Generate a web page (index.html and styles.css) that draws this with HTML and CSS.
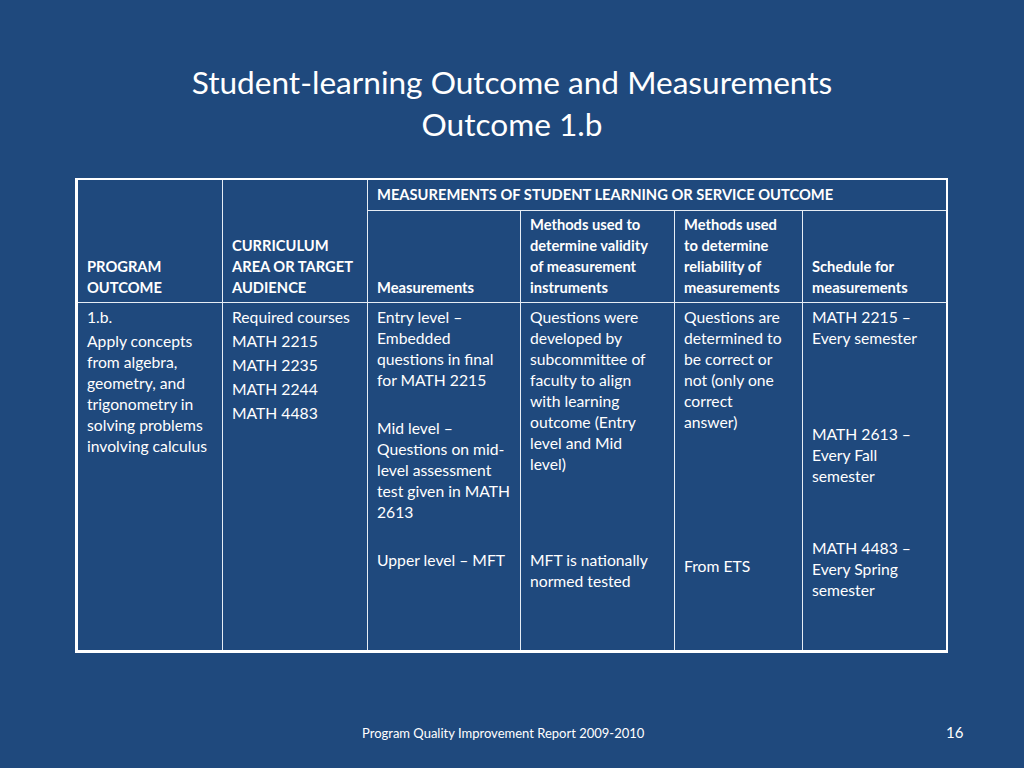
FILE: index.html
```html
<!DOCTYPE html>
<html>
<head>
<meta charset="utf-8">
<link rel="stylesheet" href="styles.css">
</head>
<body>
<div class="slide">
  <h1 class="title">Student-learning Outcome and Measurements<br>Outcome 1.b</h1>
  <table class="grid">
    <colgroup>
      <col class="c1"><col class="c2"><col class="c3"><col class="c4"><col class="c5"><col class="c6">
    </colgroup>
    <thead>
      <tr>
        <th rowspan="2">PROGRAM<br>OUTCOME</th>
        <th rowspan="2">CURRICULUM<br>AREA OR TARGET<br>AUDIENCE</th>
        <th colspan="4" class="span">MEASUREMENTS OF STUDENT LEARNING OR SERVICE OUTCOME</th>
      </tr>
      <tr>
        <th>Measurements</th>
        <th>Methods used to<br>determine validity<br>of measurement<br>instruments</th>
        <th>Methods used<br>to determine<br>reliability of<br>measurements</th>
        <th>Schedule for<br>measurements</th>
      </tr>
    </thead>
    <tbody>
      <tr>
        <td>
          <p>1.b.</p>
          <p>Apply concepts<br>from algebra,<br>geometry, and<br>trigonometry in<br>solving problems<br>involving calculus</p>
        </td>
        <td>
          <p>Required courses</p>
          <p>MATH 2215</p>
          <p>MATH 2235</p>
          <p>MATH 2244</p>
          <p>MATH 4483</p>
        </td>
        <td>
          <p>Entry level –<br>Embedded<br>questions in final<br>for MATH 2215</p>
          <p class="blank">&nbsp;</p>
          <p>Mid level –<br>Questions on mid-<br>level assessment<br>test given in MATH<br>2613</p>
          <p class="blank">&nbsp;</p>
          <p>Upper level – MFT</p>
        </td>
        <td>
          <p>Questions were<br>developed by<br>subcommittee of<br>faculty to align<br>with learning<br>outcome (Entry<br>level and Mid<br>level)</p>
          <p class="blank">&nbsp;</p>
          <p class="blank">&nbsp;</p>
          <p class="blank">&nbsp;</p>
          <p>MFT is nationally<br>normed tested</p>
        </td>
        <td>
          <p>Questions are<br>determined to<br>be correct or<br>not (only one<br>correct<br>answer)</p>
          <p class="blank">&nbsp;</p>
          <p class="blank">&nbsp;</p>
          <p class="blank">&nbsp;</p>
          <p class="blank">&nbsp;</p>
          <p class="blank">&nbsp;</p>
          <p>From ETS</p>
        </td>
        <td>
          <p>MATH 2215 –<br>Every semester</p>
          <p class="blank">&nbsp;</p>
          <p class="blank">&nbsp;</p>
          <p class="blank">&nbsp;</p>
          <p>MATH 2613 –<br>Every Fall<br>semester</p>
          <p class="blank">&nbsp;</p>
          <p class="blank">&nbsp;</p>
          <p>MATH 4483 –<br>Every Spring<br>semester</p>
        </td>
      </tr>
    </tbody>
  </table>
  <div class="footer">
    <span class="report">Program Quality Improvement Report 2009-2010</span>
    <span class="page">16</span>
  </div>
</div>
</body>
</html>
```

FILE: styles.css
```css
html, body {
  margin: 0;
  padding: 0;
  background: #1f497d;
}
.slide {
  width: 1024px;
  height: 768px;
  background: #1f497d;
  color: #ffffff;
  font-family: Lato, "Liberation Sans", sans-serif;
  display: flex;
  flex-direction: column;
  align-items: flex-start;
  box-sizing: border-box;
  padding-top: 61px;
}
.title {
  align-self: stretch;
  margin: 0;
  font-weight: 400;
  font-size: 31.6px;
  line-height: 42px;
  text-align: center;
}
.grid {
  margin-top: 33px;
  margin-left: 75px;
  width: 870px;
  table-layout: fixed;
  border-collapse: collapse;
  border-left: 3px solid #ffffff;
  border-top: 2px solid #ffffff;
  border-right: 2px solid #ffffff;
  border-bottom: 3px solid #ffffff;
}
.c1 { width: 146px; }
.c2 { width: 145px; }
.c3 { width: 153px; }
.c4 { width: 154px; }
.c5 { width: 128px; }
.c6 { width: 144px; }
.grid th, .grid td {
  border: 1px solid #e6edf5;
  padding: 0 9px;
  text-align: left;
}
.grid th {
  font-weight: 700;
  font-size: 14.7px;
  line-height: 21px;
  vertical-align: bottom;
  padding-bottom: 4px;
  height: 87px;
}
.grid th.span {
  height: 20px;
  vertical-align: middle;
  padding-top: 4px;
  padding-bottom: 5px;
  white-space: nowrap;
}
.grid td {
  vertical-align: top;
  font-size: 15.7px;
  line-height: 21px;
  height: 347px;
  padding-top: 0;
}
.grid td p {
  margin: 3px 0 0 0;
}
.grid td p:first-child {
  margin-top: 4px;
}
.footer {
  align-self: stretch;
  margin-top: auto;
  height: 60px;
  position: relative;
}
.report {
  position: absolute;
  left: 362px;
  top: 17px;
  font-size: 13px;
  line-height: 16px;
}
.page {
  position: absolute;
  left: 946px;
  top: 15px;
  font-size: 15px;
  line-height: 18px;
}
```
